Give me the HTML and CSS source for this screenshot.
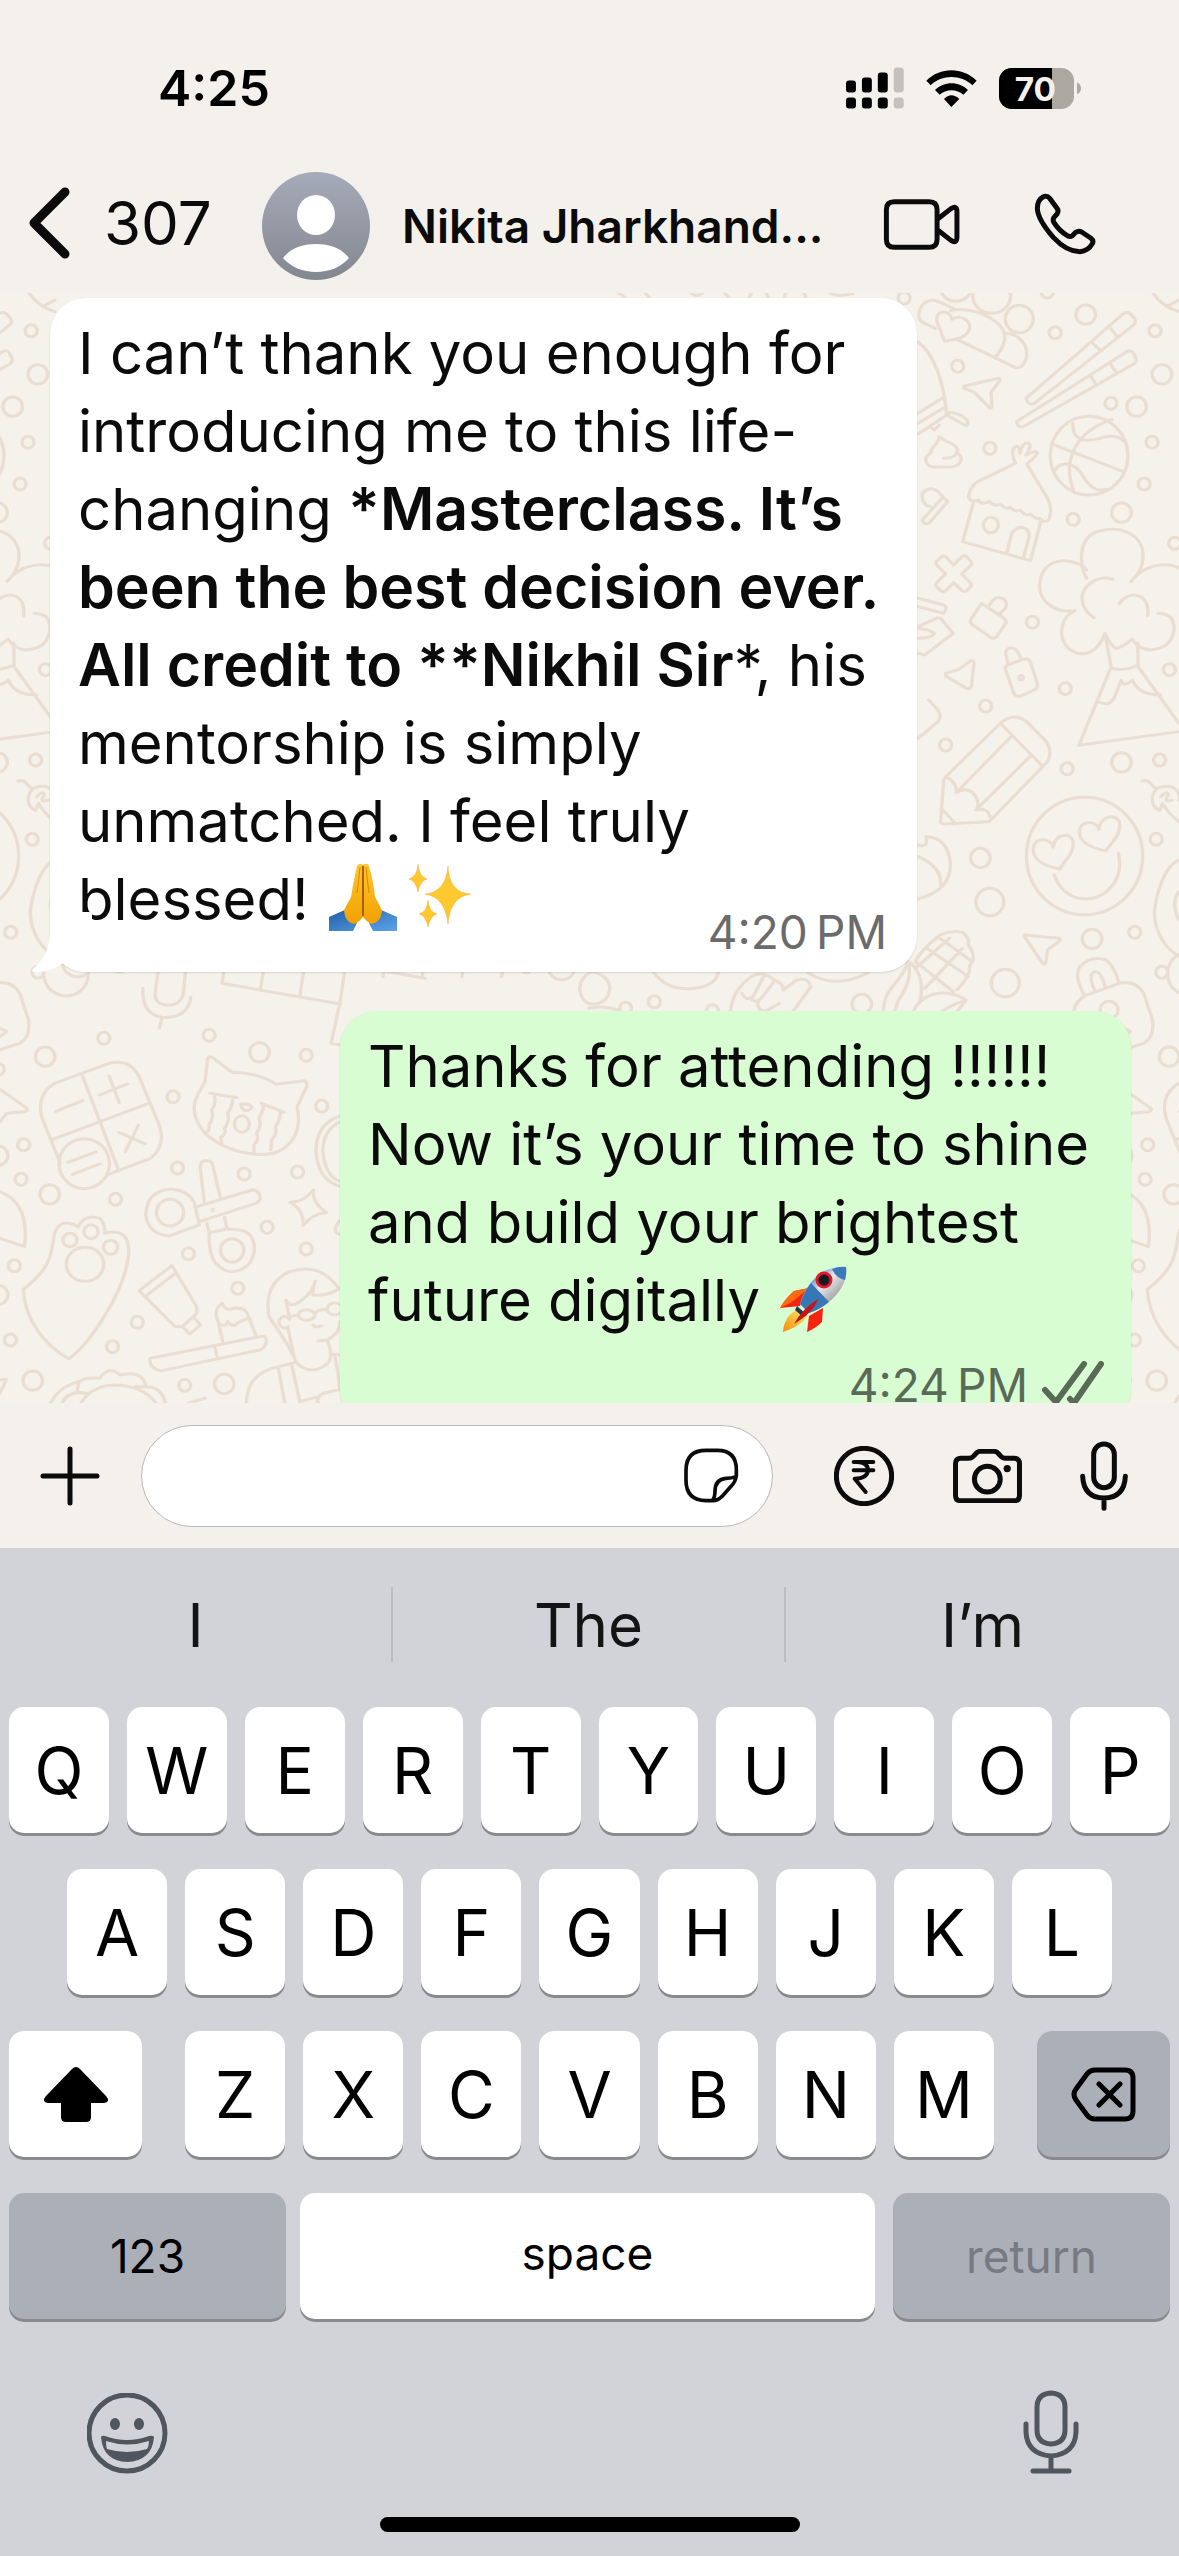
FILE: index.html
```html
<!DOCTYPE html>
<html lang="en">
<head>
<meta charset="utf-8">
<meta name="viewport" content="width=device-width, initial-scale=1">
<title>Chat</title>
<link rel="stylesheet" href="styles.css">
</head>
<body>
<div class="app">
  <header class="top">
    <div class="status">
      <time class="clock">4:25</time>
      <div class="indicators">
        <svg class="signal" viewBox="78 50 175 125" aria-label="Signal"><rect x="78" y="90" width="30" height="36" rx="9"/><rect x="126" y="81" width="30" height="45" rx="9"/><rect x="174" y="66" width="30" height="60" rx="9"/><rect class="dim" x="222" y="51" width="30" height="75" rx="9"/><rect x="78" y="141" width="30" height="33" rx="9"/><rect x="126" y="141" width="30" height="33" rx="9"/><rect x="174" y="141" width="30" height="33" rx="9"/><rect class="dim" x="222" y="141" width="30" height="33" rx="9"/></svg>
        <svg class="wifi" viewBox="318 54 153 114" aria-label="Wi-Fi"><path d="M319 89C360 47 428 47 470 89L457 103C424 70 365 70 332 103ZM345 117C372 90 417 90 444 117L430 131C411 113 378 113 359 131ZM372 144Q394 122 418 144L394 168Z"/></svg>
        <svg class="battery" viewBox="537 51 246 123" aria-label="Battery"><clipPath id="level"><rect x="537" y="51" width="159" height="123"/></clipPath><rect class="spent" x="537" y="51" width="225" height="123" rx="38"/><rect x="537" y="51" width="225" height="123" rx="38" clip-path="url(#level)"/><path class="spent" d="M771 94Q783 100 783 112Q783 124 771 130Z"/><text x="646" y="150" text-anchor="middle">70</text></svg>
      </div>
    </div>
    <div class="bar">
      <a class="back" href="#chats"><svg class="chevron" viewBox="0 0 42 72" aria-hidden="true"><path d="M37 5L6 36L37 67"/></svg><span>307</span></a>
      <svg class="avatar" viewBox="0 0 108 108" aria-label="Profile photo"><defs><linearGradient id="av" x2="0" y2="1"><stop offset="0" stop-color="#a5abb8"/><stop offset="1" stop-color="#838790"/></linearGradient></defs><circle cx="54" cy="54" r="54" fill="url(#av)"/><ellipse cx="54" cy="43" rx="19" ry="20" fill="#fff"/><path d="M21 86C28 77 39 72 54 72S80 77 87 86C79 95 67 100 54 100S29 95 21 86Z" fill="#fff"/></svg>
      <h1 class="name">Nikita Jharkhand...</h1>
      <button class="icon" aria-label="Video call"><svg width="77" height="53" viewBox="188 442 232 160"><path d="M222 453H327Q351 453 351 477V567Q351 591 327 591H222Q198 591 198 567V477Q198 453 222 453ZM352 506L393 474Q411 463 411 482V559Q411 582 393 570L352 538"/></svg></button>
      <button class="icon call" aria-label="Voice call"><svg width="62" height="62" viewBox="642 429 186 186"><path d="M652 476Q652 450 669 441Q681 435 690 446L711 475Q717 483 711 492L702 502Q697 510 702 518Q718 543 742 557Q750 562 757 557L767 547Q776 541 785 546L812 564Q822 571 817 581Q805 603 780 605Q740 605 700 562Q654 510 652 476Z"/></svg></button>
    </div>
  </header>

  <main class="chat">
    <svg class="wallpaper" viewBox="0 293 1179 1110" preserveAspectRatio="xMinYMin slice" aria-hidden="true">
      <defs>
        <ellipse id="s" rx="16" ry="18"/><ellipse id="m" rx="26" ry="29"/><ellipse id="l" rx="37" ry="41"/>
        <g id="tile">
          <g transform="translate(589 290) scale(.3774 .3333)">
            <use href="#s" x="1235" y="128"/><use href="#s" x="977" y="229"/><use href="#s" x="1500" y="122"/><use href="#s" x="1383" y="340"/><use href="#s" x="1062" y="475"/><use href="#s" x="1492" y="457"/><use href="#s" x="1471" y="582"/><use href="#s" x="1283" y="688"/><use href="#s" x="1552" y="760"/><use href="#s" x="1175" y="997"/><use href="#s" x="1262" y="1196"/><use href="#s" x="1051" y="1248"/><use href="#s" x="1538" y="1139"/><use href="#s" x="835" y="24"/><use href="#s" x="1214" y="6"/>
            <use href="#m" x="1316" y="74"/><use href="#m" x="1518" y="253"/><use href="#m" x="1451" y="350"/><use href="#m" x="1411" y="668"/><use href="#l" x="1140" y="87"/>
            <ellipse cx="1067" cy="18" rx="50" ry="52"/><ellipse cx="972" cy="-6" rx="40" ry="40"/>
            <ellipse cx="1325" cy="497" rx="103" ry="118"/>
            <path d="M1229 463L1416 545M1386 388C1300 420 1250 500 1284 602M1282 400C1280 450 1310 458 1350 446C1390 432 1405 440 1420 455M1233 545C1245 510 1290 515 1310 560C1330 595 1345 605 1370 598"/>
            <path d="M1158 325L1415 72Q1425 62 1435 72L1445 85Q1452 95 1443 105L1180 340Q1165 350 1158 325ZM1335 160L1357 183M1378 110L1400 140M1133 395L1425 185Q1437 178 1443 190L1449 205Q1452 217 1443 222L1150 410Q1135 415 1133 395ZM1327 255L1345 285M1380 220L1397 248"/>
            <path d="M994 288L1085 265Q1090 266 1088 272L1065 308L1068 350Q1067 358 1060 352L1022 308L993 294Z"/>
            <path d="M942 154L922 95C915 60 955 55 962 88C985 70 1020 95 1005 125C995 145 970 148 942 154ZM918 115L885 98C860 85 880 20 920 32L975 60M958 62C1010 45 1110 90 1101 150C1098 175 1085 190 1075 203M1101 130C1140 130 1160 165 1160 190C1160 215 1145 238 1130 233L975 148"/>
            <path d="M872 155C920 200 940 280 948 375L872 432M872 370L940 322M872 400L945 350M948 375L1000 408Q1008 400 1000 388Q980 368 950 367M905 410L915 420L928 405"/>
            <path d="M928 440C925 470 905 465 905 490C885 500 890 530 915 532L965 530C990 525 992 495 975 490C985 465 950 460 928 440ZM940 505Q972 505 975 485"/>
            <path d="M883 610Q905 585 925 605L950 635L905 695Q890 710 883 690L935 625M883 610Q880 645 905 650"/>
            <path d="M1130 520Q1115 480 1130 470Q1140 465 1142 490Q1150 450 1168 462Q1170 475 1158 495Q1180 480 1188 488Q1185 500 1160 522L1215 625Q1230 660 1218 690Q1205 700 1195 685Q1185 690 1170 672Q1155 680 1143 660Q1130 668 1115 652Q1105 660 1090 642Q1075 652 1060 634Q1040 648 1032 630Q1010 640 1005 620Q1010 590 1030 575L1130 520M1018 640L990 755L1170 812L1197 695M1107 790L1120 730Q1135 705 1155 715Q1170 725 1165 745L1152 800"/>
            <ellipse cx="1065" cy="705" rx="20" ry="23"/>
            <path d="M966 825L988 800Q995 795 1000 800L1012 815Q1016 822 1010 828L988 852L1010 878Q1016 885 1010 892L1000 903Q993 908 988 902L966 878L945 902Q938 908 932 902L921 890Q917 883 922 877L945 852L921 825Q917 818 922 812L935 800Q940 796 945 800Z"/>
            <path d="M1040 940L1100 985Q1108 992 1104 1000L1080 1040Q1072 1048 1064 1042L1015 1003Q1008 996 1012 988ZM1062 945Q1075 915 1095 925Q1112 935 1103 955L1090 970"/>
            <path d="M1319 865C1300 830 1295 750 1340 728C1400 700 1470 730 1468 800C1466 840 1450 860 1436 875C1470 820 1540 815 1563 835M1319 840C1300 810 1220 790 1198 860C1180 930 1230 970 1288 962C1250 980 1240 1040 1270 1075C1310 1110 1350 1085 1367 1030L1384 1135Q1420 1145 1455 1125L1454 1060M1367 1030Q1385 1075 1400 1075Q1415 1070 1439 1047Q1460 1085 1500 1078C1550 1070 1560 1010 1540 980Q1525 970 1508 970M1388 868C1340 850 1300 900 1307 930Q1310 965 1338 983M1405 942C1425 900 1490 905 1480 978M1380 1140L1298 1366L1563 1325M1455 1130L1563 1300M1350 1235Q1380 1255 1395 1215L1410 1170Q1415 1195 1440 1170Q1455 1215 1515 1215"/>
            <path d="M1110 1120L1104 1090Q1105 1070 1125 1075Q1135 1078 1145 1108M1104 1140Q1100 1130 1110 1125L1150 1108Q1165 1103 1170 1118L1188 1180Q1190 1195 1180 1200L1145 1218Q1130 1222 1125 1208Z"/>
            <ellipse cx="1145" cy="1163" rx="6" ry="7"/>
            <path d="M945 1150L980 1138L1012 1112Q1020 1110 1020 1120L1013 1190Q1008 1200 1000 1195L945 1158ZM872 925L940 945Q948 950 945 960L940 970L872 950M872 1010L920 985Q930 980 935 990L965 1030L890 1095L872 1090M872 1015Q905 1020 915 1030Q910 1045 872 1045"/>
            <path d="M1495 10Q1520 50 1563 65M1530 50L1563 30M80 10L95 22M150 10L160 22M270 10Q285 22 300 10M360 10L370 22M430 10L425 22M470 10L475 22M520 10L518 22M570 10L575 22M640 10Q660 22 700 10"/>
          </g>
          <g transform="translate(589 700) scale(.3774 .3333)">
            <use href="#s" x="945" y="135"/><use href="#s" x="1267" y="206"/><use href="#s" x="1512" y="180"/><use href="#s" x="1503" y="418"/><use href="#s" x="1446" y="697"/><use href="#s" x="1518" y="817"/><use href="#s" x="173" y="905"/><use href="#s" x="97" y="925"/><use href="#s" x="327" y="932"/>
            <use href="#m" x="1411" y="187"/><use href="#m" x="1037" y="474"/><use href="#m" x="1333" y="717"/><use href="#m" x="723" y="912"/><use href="#l" x="1062" y="606"/><use href="#l" x="1103" y="849"/>
            <path d="M1090 70Q1125 35 1160 65L1208 120Q1230 150 1215 185L1060 365L940 372Q930 372 932 360L940 240Q945 230 950 225L1090 70L1203 200M945 230Q975 245 973 278Q1010 255 1027 295Q1035 315 1025 330Q1055 320 1062 350M973 278L1118 110M1025 330L1170 168M934 325L970 370"/>
            <ellipse cx="1313" cy="468" rx="154" ry="176"/>
            <path d="M1248 507C1210 500 1170 480 1178 440C1185 410 1225 415 1230 442C1235 400 1275 395 1283 425C1287 460 1260 480 1248 507ZM1370 452C1330 445 1295 425 1300 390C1305 360 1345 360 1351 388C1355 345 1400 340 1406 368C1410 405 1385 425 1370 452ZM1233 525C1260 610 1340 615 1380 565Q1415 525 1403 460"/>
            <path d="M1465 243C1490 235 1490 265 1505 265C1550 245 1570 280 1563 300M1505 265C1485 290 1490 320 1512 332L1520 310Q1535 340 1563 365M1515 290Q1530 270 1535 285Q1520 310 1545 300"/>
            <path d="M1563 480C1520 500 1500 600 1498 640C1500 700 1530 750 1563 768M1563 575Q1540 610 1563 660"/>
            <path d="M1153 705L1245 715Q1250 718 1247 723L1215 750L1210 790Q1207 796 1202 790L1155 712Z"/>
            <path d="M865 785Q880 750 930 705Q960 690 990 697Q1010 715 1005 735Q1020 755 1018 780Q1005 800 1008 815Q1000 840 975 870M860 935Q875 890 925 880Q960 875 1000 900Q960 915 935 935M1000 900L975 935M780 935C780 860 830 850 845 785Q860 835 820 900L810 935M848 785Q895 830 875 910M865 785L965 875M895 745L1005 830M930 715L1010 780M990 745L890 865M955 715L870 800"/>
            <path d="M1312 885Q1285 830 1300 800Q1330 765 1370 780Q1390 795 1405 850M1285 935Q1285 910 1312 888L1405 850Q1450 840 1470 880L1493 960Q1500 1010 1470 1030L1400 1055M1340 870Q1320 825 1340 815Q1355 812 1368 860M1410 980L1435 995L1418 1010"/>
            <ellipse cx="1378" cy="930" rx="24" ry="26"/>
            <path d="M872 435Q900 445 893 410Q950 410 958 490Q960 570 872 597M872 470Q935 500 932 555M900 0L925 30Q935 50 925 65L872 115"/>
            <path d="M375 935Q380 870 430 830Q460 810 490 840Q515 850 515 870L550 840Q580 830 588 860L540 935M405 880Q415 905 435 890L465 825M430 895Q440 915 460 890L490 845M450 900Q440 925 465 935L505 910"/>
            <path d="M172 818Q205 870 270 866Q335 860 342 818M580 818Q650 870 740 818M0 925Q40 915 75 930M10 815Q55 830 55 865Q50 912 10 912Q-20 912 -25 865Q-20 825 10 815"/>
          </g>
          <g transform="translate(0 1000) scale(.3762 .3333)">
            <use href="#m" x="120" y="170"/><use href="#m" x="690" y="157"/><use href="#m" x="132" y="583"/><use href="#m" x="87" y="1142"/><use href="#m" x="596" y="1152"/><use href="#m" x="-5" y="467"/><use href="#m" x="-5" y="885"/><use href="#m" x="318" y="-113"/>
            <use href="#s" x="276" y="115"/><use href="#s" x="556" y="106"/><use href="#s" x="814" y="166"/><use href="#s" x="460" y="290"/><use href="#s" x="855" y="318"/><use href="#s" x="63" y="434"/><use href="#s" x="56" y="538"/><use href="#s" x="472" y="504"/><use href="#s" x="649" y="522"/><use href="#s" x="791" y="516"/><use href="#s" x="307" y="598"/><use href="#s" x="710" y="682"/><use href="#s" x="814" y="747"/><use href="#s" x="501" y="761"/><use href="#s" x="632" y="865"/><use href="#s" x="38" y="797"/><use href="#s" x="365" y="967"/><use href="#s" x="28" y="1020"/><use href="#s" x="299" y="1040"/><use href="#s" x="491" y="1156"/><use href="#s" x="-5" y="208"/><use href="#s" x="543" y="-145"/><use href="#s" x="1400" y="-100"/><use href="#l" x="1493" y="-102"/>
            <path d="M160 490L112 355Q95 285 145 250L290 190Q345 175 370 230L425 380Q440 440 400 475L285 525M220 230L315 510M140 418L395 310M148 334L220 302M265 285L340 252M290 228L317 308M316 397L387 432M368 375L333 455M180 487L255 456M192 523L266 492"/>
            <ellipse cx="224" cy="491" rx="67" ry="75"/>
            <path d="M545 245L552 175Q558 165 568 175L618 218Q680 215 735 253L808 242Q818 245 815 260L790 320Q800 380 780 415Q750 470 680 463Q600 455 545 400Q500 340 525 285ZM558 280L630 293M695 310L755 337M570 290Q575 310 563 330Q570 355 555 375Q560 390 545 400M618 300Q618 320 605 340Q612 360 597 385Q603 400 587 412L590 435M700 315Q700 335 688 355Q697 375 682 400Q690 420 675 435L675 455M745 340Q745 360 732 380Q738 400 722 420L720 450M640 312Q665 310 670 322Q660 335 652 332Q640 325 640 312Z"/>
            <ellipse cx="643" cy="372" rx="20" ry="25"/>
            <ellipse cx="452" cy="638" rx="36" ry="40"/><ellipse cx="617" cy="751" rx="31" ry="35"/><ellipse cx="565" cy="630" rx="2" ry="2"/>
            <path d="M517 610C500 560 420 550 395 605C375 660 400 705 450 708L530 675ZM517 622L670 570Q690 570 692 595Q690 605 680 610L530 665M543 605L532 500Q535 480 550 482Q562 482 565 495L585 590M550 670L556 700Q555 760 570 785Q610 840 660 795Q690 750 665 705Q650 685 600 688L556 698M597 652L603 686"/>
            <path d="M833 570Q830 610 868 638Q830 640 806 676Q808 630 771 607Q810 605 833 570Z"/>
            <path d="M62 868C140 800 135 760 145 700Q160 650 208 680Q225 640 265 655Q280 670 278 700Q345 680 342 760C335 870 240 1030 183 1077C110 1030 65 950 62 868Z"/>
            <ellipse cx="226" cy="793" rx="50" ry="51"/><ellipse cx="186" cy="720" rx="19" ry="20"/><ellipse cx="242" cy="695" rx="19" ry="21"/><ellipse cx="294" cy="742" rx="19" ry="21"/>
            <path d="M457 797L370 872L465 980L485 980L523 940Q525 925 520 915ZM466 820L388 888M485 980L505 1002L533 975L518 955"/>
            <path d="M400 1075L690 1010Q710 1005 708 1025Q705 1045 690 1050L430 1112Q400 1110 398 1080ZM570 1038L578 1073M592 1025L580 965Q565 930 590 910Q600 935 620 925Q655 920 660 950L680 1005M580 970Q600 985 605 965Q615 980 625 975Q640 960 665 955"/>
            <path d="M778 1065Q770 1040 715 950Q700 850 770 815Q850 785 900 865M765 980Q775 1040 785 1085Q830 1135 875 1085Q885 1060 870 1020M845 1023L870 1020Q905 1000 903 965M765 985Q740 985 742 960Q755 940 770 958L760 900Q770 920 785 912Q830 885 838 843Q830 870 832 885Q870 890 903 865M770 950L793 945M837 940Q850 925 870 930M832 975Q840 985 855 978M655 1210Q655 1120 740 1100L778 1090M740 1105L757 1210M775 1092L797 1205L845 1190M885 1063L903 1065M845 1210Q840 1190 860 1180L905 1168M890 1065Q900 1120 903 1170"/>
            <ellipse cx="815" cy="945" rx="22" ry="16"/><ellipse cx="890" cy="927" rx="20" ry="18"/>
            <path d="M135 1210Q155 1160 210 1145Q230 1130 265 1135Q290 1095 320 1125Q380 1110 388 1160Q430 1160 440 1210M165 1210Q180 1170 230 1180M210 1145L205 1175M215 1210Q240 1160 300 1155Q380 1155 415 1210M360 1160L388 1160M500 1210L545 1195"/>
            <path d="M0 575Q80 610 65 740L0 715M0 268L72 325Q74 332 65 335L18 340L0 365M0 1140L17 1138L0 1180"/>
            <path d="M905 348Q840 370 840 455Q845 540 905 560M905 365Q858 390 858 455Q865 530 905 545M905 660Q890 675 892 695Q895 700 905 705"/>
            <path d="M165 -142C120 -135 100 -80 130 -35C170 10 235 -15 235 -82C210 -55 155 -70 165 -142ZM425 -120Q430 -145 460 -143Q495 -140 495 -105L487 -15Q475 20 440 15Q410 10 412 -20ZM380 -35Q375 40 430 52Q500 55 507 -8M430 55L424 85"/>
            <path d="M607 -167L1130 -65M607 -167L590 -50L905 12M715 -182L692 -32M820 -182L797 -12M928 -182L905 0L880 130L905 135M1033 -182L1018 -70M1140 -175L1122 -70M1242 -155L1228 -70M1120 -180L1345 -140L1333 -70"/>
          </g>
        </g>
      </defs>
      <use href="#tile"/><use href="#tile" x="-1124"/><use href="#tile" x="1124"/>
    </svg>

    <article class="bubble incoming">
      <svg class="tail" width="60" height="60" viewBox="0 0 60 60" aria-hidden="true"><path d="M18 0V20C18 36 12 48 1 57Q-1 59 2 60C14 60 24 57 31 51Q38 58 50 60H60V0Z"/></svg>
      <p>I can’t thank you enough for<br>introducing me to this life-<br>changing <b>*Masterclass. It’s<br>been the best decision ever.<br>All credit to **Nikhil Sir</b>*, his<br>mentorship is simply<br>unmatched. I feel truly<br>blessed!
        <svg class="emoji" width="68" height="68" viewBox="0 0 68 68" role="img" aria-label="Folded hands"><defs><linearGradient id="skin" x2="0" y2="1"><stop offset="0" stop-color="#ffc62e"/><stop offset="1" stop-color="#f2a100"/></linearGradient><linearGradient id="cuff" x2="1" y2="1"><stop offset="0" stop-color="#1d5fa8"/><stop offset="1" stop-color="#5ea3ea"/></linearGradient></defs><path d="M0 54L18 46L28 60L24 68H0ZM68 54L50 46L40 60L44 68H68Z" fill="url(#cuff)"/><path d="M34 2Q38-1 40 3Q44 16 46 34L53 47Q52 60 42 61Q37 58 34 54Q31 58 26 61Q16 60 15 47L22 34Q25 16 28 3Q30-1 34 2Z" fill="url(#skin)"/><path d="M34 3V53" fill="none" stroke="#a85e00" stroke-width="2"/><path d="M28 30Q30 16 31 4M40 30Q38 16 37 4" fill="none" stroke="#d88900" stroke-width="1"/></svg>
        <svg class="emoji sparkle" width="63" height="68" viewBox="0 0 63 68" role="img" aria-label="Sparkles"><path d="M39 3Q40 30 62 31Q41 34 39 61Q36 34 16 31Q37 29 39 3ZM9 1Q10 14 18 16Q11 18 9 29Q7 18 0 16Q8 14 9 1ZM19 37Q20 49 28 51Q21 53 19 64Q17 53 10 51Q18 49 19 37Z"/></svg></p>
      <div class="meta"><time>4:20&#8239;PM</time></div>
    </article>

    <article class="bubble outgoing">
      <p>Thanks for attending !!!!!!<br>Now it’s your time to shine<br>and build your brightest<br>future digitally
        <svg class="emoji" width="68" height="66" viewBox="0 0 68 66" role="img" aria-label="Rocket"><defs><linearGradient id="hull" x2="1" y2="1"><stop offset=".2" stop-color="#3d7fc0"/><stop offset=".45" stop-color="#e8e8e8"/><stop offset=".8" stop-color="#8b8f94"/></linearGradient><linearGradient id="fire" x1="1" x2="0" y2="1"><stop offset="0" stop-color="#fff06a"/><stop offset="1" stop-color="#f58a0c"/></linearGradient></defs><path d="M29 22L14 25Q5 33 0 42L20 40ZM43 42L42 56Q36 62 27 66L29 50Z" fill="#f5240f"/><path d="M29 22L14 25Q5 33 0 42L12 36Z" fill="#ff6a12"/><path d="M18 43L28 47Q26 58 3 66Q4 50 18 43Z" fill="url(#fire)"/><path d="M66 1Q50 0 38 9Q24 22 20 38L29 47Q45 42 57 28Q68 15 66 1Z" fill="url(#hull)"/><path d="M66 1Q59 0 52 3Q56 12 65 14Q67 7 66 1Z" fill="#3b79b8"/><path d="M31 17L49 36Q39 44 29 47L20 38Q24 26 31 17Z" fill="#3976b5"/><circle cx="44" cy="14" r="7" fill="#151a20" stroke="#e3162c" stroke-width="3"/><path d="M17 40L27 49L23 51L15 44Z" fill="#26384d"/><path d="M38 33Q34 46 14 58Q22 43 38 33Z" fill="#c4161c"/></svg></p>
      <div class="meta"><time>4:24&#8239;PM</time><svg class="ticks" width="62" height="44" viewBox="0 0 62 44" aria-label="Delivered"><path d="M3 29L14 41L42 3M28 38L32 42L59 3"/></svg></div>
    </article>
  </main>

  <form class="composer">
    <button type="button" class="icon" aria-label="Attach"><svg width="60" height="60" viewBox="0 0 60 60"><path stroke-width="5" d="M30 3V57M3 30H57"/></svg></button>
    <div class="field">
      <input type="text" aria-label="Message">
      <button type="button" class="icon" aria-label="Stickers"><svg class="thin" width="55" height="55" viewBox="72 117 165 165"><path d="M158 275H138Q78 274 78 214V184Q78 124 138 124H172Q229 124 229 182V200Q227 218 213 232L188 260Q174 275 158 275ZM157 274Q165 266 165 246Q166 210 198 208Q216 208 228 203"/></svg></button>
    </div>
    <button type="button" class="icon pay" aria-label="Payment"><svg width="60" height="60" viewBox="522 108 180 180"><circle cx="612" cy="198" r="83"/><path stroke-width="12" d="M581 156H640M581 181H640M592 156Q624 157 624 181Q622 205 584 206L617 246"/></svg></button>
    <button type="button" class="icon camera" aria-label="Camera"><svg width="69" height="54" viewBox="879 116 207 163"><path d="M886 160Q886 145 901 144H925Q936 144 942 136L948 129Q953 123 962 123H1002Q1010 123 1015 129L1021 136Q1027 144 1037 144H1064Q1079 145 1079 160V256Q1079 272 1064 272H901Q886 272 886 256Z"/><circle cx="982" cy="207" r="39"/><circle class="dot" cx="1042" cy="175" r="11"/></svg></button>
    <button type="button" class="icon voice" aria-label="Voice message"><svg width="48" height="70" viewBox="1260 88 144 210"><rect x="1301" y="97" width="62" height="131" rx="31"/><path d="M1268 194Q1271 258 1332 259Q1393 258 1396 194M1332 259V290"/></svg></button>
  </form>

  <section class="keyboard" aria-label="Keyboard">
    <div class="suggestions"><button>I</button><button>The</button><button>I’m</button></div>
    <div class="keys">
      <div class="row"><button>Q</button><button>W</button><button>E</button><button>R</button><button>T</button><button>Y</button><button>U</button><button>I</button><button>O</button><button>P</button></div>
      <div class="row middle"><button>A</button><button>S</button><button>D</button><button>F</button><button>G</button><button>H</button><button>J</button><button>K</button><button>L</button></div>
      <div class="row third">
        <button aria-label="Shift"><svg width="64" height="55" viewBox="0 0 64 55"><path d="M28 2Q32-2 36 2L62 29Q67 35 60 36H47V50Q47 55 42 55H22Q17 55 17 50V36H4Q-3 35 2 29Z"/></svg></button>
        <div class="letters"><button>Z</button><button>X</button><button>C</button><button>V</button><button>B</button><button>N</button><button>M</button></div>
        <button class="dark" aria-label="Delete"><svg class="erase" width="65" height="55" viewBox="0 0 65 55"><path d="M24 3H54Q62 3 62 11V44Q62 52 54 52H24Q19 52 16 48L5 33Q1 27 5 22L16 7Q19 3 24 3ZM28 17L49 38M49 17L28 38"/></svg></button>
      </div>
      <div class="row fourth"><button class="dark word">123</button><button class="word space">space</button><button class="dark word" disabled>return</button></div>
    </div>
    <div class="tools">
      <button aria-label="Emoji"><svg width="81" height="81" viewBox="0 0 81 81"><circle cx="40" cy="40" r="38" fill="none" stroke="currentColor" stroke-width="5"/><ellipse cx="28" cy="31" rx="5" ry="6"/><ellipse cx="52" cy="31" rx="5" ry="6"/><path fill-rule="evenodd" d="M14 44Q15 42 18 43Q40 51 62 43Q66 42 67 44Q65 68 40 69Q16 68 14 44ZM19 48Q40 55 62 48Q62 53 60 56Q40 62 20 56Q19 53 19 48Z"/></svg></button>
      <button aria-label="Dictate"><svg width="56" height="84" viewBox="0 0 56 84"><path fill="none" stroke="currentColor" stroke-width="5" stroke-linecap="round" stroke-linejoin="round" d="M28 3Q42 4 42 17V40Q42 53 28 54Q14 53 14 40V17Q14 4 28 3ZM3 34V42Q4 64 28 66Q52 64 53 42V34M28 66V81M10 81H46"/></svg></button>
    </div>
    <div class="home"></div>
  </section>
</div>
</body>
</html>
```
FILE: styles.css
```css
* { box-sizing: border-box; }

body {
  margin: 0;
  background: #f4f1ec;
  color: #0b0b0b;
  font-family: Inter, "Liberation Sans", sans-serif;
}

button {
  margin: 0;
  padding: 0;
  border: 0;
  background: none;
  color: inherit;
  font: inherit;
}

svg { display: block; flex: none; }

.app {
  display: flex;
  flex-direction: column;
  height: 100vh;
}

/* Status bar and chat header */
.top { padding-bottom: 13px; }

.status {
  display: flex;
  justify-content: space-between;
  align-items: center;
  height: 172px;
  padding: 4px 98px 0 158px;
  color: #000;
}

.clock { font-size: 50px; font-weight: 600; }
.indicators { display: flex; align-items: center; gap: 22px; }
.signal { width: 58px; height: 42px; }
.wifi { width: 51px; height: 38px; }
.battery { width: 82px; height: 41px; }
.dim { fill: #c4c0bb; }
.spent { fill: #aba7a1; }
.battery text { fill: #f4f1ec; font-size: 100px; font-weight: 700; }

.bar {
  display: flex;
  align-items: center;
  height: 108px;
  padding: 0 83px 0 28px;
}

.back {
  display: flex;
  align-items: center;
  gap: 34px;
  width: 234px;
  padding-bottom: 6px;
  color: inherit;
  font-size: 60px;
  text-decoration: none;
}

.chevron {
  width: 42px;
  height: 72px;
  fill: none;
  stroke: currentColor;
  stroke-width: 9;
  stroke-linecap: round;
  stroke-linejoin: round;
}

.avatar { width: 108px; height: 108px; }

.name {
  flex: 1;
  min-width: 0;
  margin: 0 0 0 32px;
  font-size: 46px;
  font-weight: 600;
  white-space: nowrap;
}

.icon svg {
  fill: none;
  stroke: currentColor;
  stroke-width: 15;
  stroke-linecap: round;
  stroke-linejoin: round;
}

.icon .thin { stroke-width: 11; }
.icon .dot { fill: currentColor; stroke: none; }
.bar .icon { padding-bottom: 4px; }
.call { margin-left: 74px; }

/* Conversation */
.chat {
  position: relative;
  display: flex;
  flex: 1;
  flex-direction: column;
  gap: 39px;
  min-height: 0;
  padding: 5px 48px 0 50px;
  overflow: hidden;
  background: #f5f2eb;
}

.wallpaper {
  position: absolute;
  inset: 0;
  width: 100%;
  height: 100%;
  fill: none;
  stroke: #eaded2;
  stroke-width: 9;
  stroke-linecap: round;
  stroke-linejoin: round;
}

.bubble {
  position: relative;
  display: flex;
  flex: none;
  flex-direction: column;
  max-width: 100%;
  padding: 16px 30px 16px 28px;
  border-radius: 36px;
  font-size: 58px;
  line-height: 78px;
  box-shadow: 0 1px 2px #0000001f;
}

.bubble p { margin: 0; white-space: nowrap; }
.bubble b { font-size: 59px; font-weight: 600; line-height: 1; }
.incoming { align-self: flex-start; width: 867px; background: #fff; }
.outgoing { align-self: flex-end; width: 791px; background: #d9fdd3; }

.tail {
  position: absolute;
  bottom: 0;
  left: -18px;
  fill: #fff;
}

.emoji { display: inline-block; margin-left: 4px; vertical-align: -11px; }
.sparkle { margin-left: -4px; fill: #fdc92f; stroke: #f9a13a66; }

.meta {
  display: flex;
  align-self: flex-end;
  gap: 14px;
  color: #6b6b6b;
  font-size: 46px;
  line-height: 48px;
}

.incoming .meta { margin-top: -30px; }
.outgoing .meta { margin-top: 22px; margin-right: -3px; color: #596b57; }

.ticks {
  fill: none;
  stroke: currentColor;
  stroke-width: 6;
  stroke-linecap: round;
  stroke-linejoin: round;
}

/* Message composer */
.composer {
  display: flex;
  align-items: center;
  height: 145px;
  padding: 0 51px 0 40px;
}

.field {
  display: flex;
  flex: 1;
  align-items: center;
  min-width: 0;
  height: 102px;
  margin-left: 41px;
  padding: 0 33px;
  border: 1px solid #b9b9b9;
  border-radius: 51px;
  background: #fff;
}

.field input {
  flex: 1;
  width: 0;
  min-width: 0;
  border: 0;
  outline: 0;
  background: none;
  font: inherit;
  font-size: 58px;
}

.pay { margin-left: 61px; }
.camera { margin-left: 59px; }
.voice { margin-left: 58px; }

/* Keyboard */
.keyboard {
  padding: 39px 9px 24px;
  background: #d2d3d8;
}

.suggestions {
  display: grid;
  grid-template-columns: repeat(3, 1fr);
  margin: 0 -9px 45px;
}

.suggestions button {
  height: 75px;
  color: #141414;
  font-size: 60px;
}

.suggestions button:not(:last-child) { border-right: 2px solid #bcbdc1; }

.keys { display: grid; gap: 36px; color: #000; }
.row, .letters { display: flex; gap: 18px; }
.letters { flex: 809; margin: 0 25px; }
.middle { padding: 0 58px; }

.keys button {
  display: flex;
  flex: 1;
  justify-content: center;
  align-items: center;
  min-width: 0;
  height: 126px;
  border-radius: 15px;
  background: #fff;
  box-shadow: 0 3px 0 #898a8d;
  font-size: 64px;
}

.third > button { flex: 133; }
.fourth button:nth-child(odd) { flex: 277; }
.fourth button:nth-child(even) { flex: 575; margin-left: -4px; }
.keys .dark { background: #abafb8; }
.keys .word { font-size: 46px; }
.keys .space { padding-bottom: 6px; }
.keys button:disabled { color: #777a82; }

.erase {
  fill: none;
  stroke: currentColor;
  stroke-width: 5;
  stroke-linecap: round;
  stroke-linejoin: round;
}

.tools {
  display: flex;
  justify-content: space-between;
  align-items: flex-end;
  padding: 71px 91px 0 87px;
  margin-left: -9px;
  color: #50565e;
}

.tools svg { fill: currentColor; }

.home {
  width: 420px;
  max-width: 60%;
  height: 15px;
  margin: 43px auto 0;
  border-radius: 8px;
  background: #000;
}
```
